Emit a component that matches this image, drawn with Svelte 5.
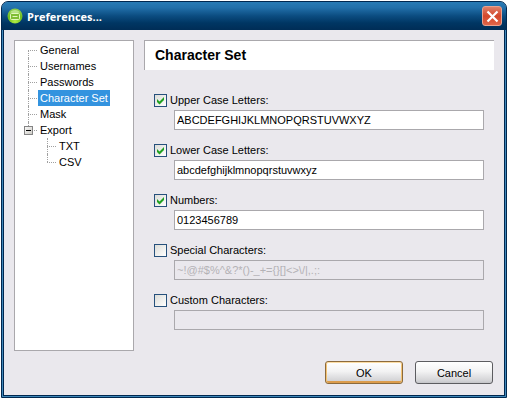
<script>
	let selected = $state('Character Set');
	let exportOpen = $state(true);

	const pages = ['General', 'Usernames', 'Passwords', 'Character Set', 'Mask'];
	const exportPages = ['TXT', 'CSV'];

	let fields = $state([
		{ id: 'upper', label: 'Upper Case Letters:', enabled: true, value: 'ABCDEFGHIJKLMNOPQRSTUVWXYZ' },
		{ id: 'lower', label: 'Lower Case Letters:', enabled: true, value: 'abcdefghijklmnopqrstuvwxyz' },
		{ id: 'numbers', label: 'Numbers:', enabled: true, value: '0123456789' },
		{ id: 'special', label: 'Special Characters:', enabled: false, value: '~!@#$%^&?*()-_+={}[]<>\\/|,.;:' },
		{ id: 'custom', label: 'Custom Characters:', enabled: false, value: '' }
	]);
</script>

{#snippet page(name)}
	<button class="node" class:selected={selected === name} onclick={() => (selected = name)}>{name}</button>
{/snippet}

<div class="window">
	<header class="titlebar">
		<svg class="logo" width="16" height="16" viewBox="0 0 16 16" aria-hidden="true">
			<defs>
				<radialGradient id="ball" cx="50%" cy="85%" r="85%">
					<stop offset="0" stop-color="#b4ee48" />
					<stop offset="0.55" stop-color="#6fbd1c" />
					<stop offset="1" stop-color="#8fcf50" />
				</radialGradient>
			</defs>
			<circle cx="8" cy="8" r="7.5" fill="url(#ball)" />
			<path d="M3 4.5C4.5 1 11.500 1 13 4.500Q8 6 3 4.500Z" fill="#d2efac" opacity="0.7" />
			<rect x="3.500" y="5.500" width="9" height="6" rx="1" fill="#7fbe35" stroke="#e2f7bd" />
			<path d="M5.500 8.500h5" stroke="#e2f7bd" />
		</svg>
		<span class="title">Preferences...</span>
		<button class="close" aria-label="Close">
			<svg width="13" height="13" viewBox="0 0 13 13" aria-hidden="true">
				<path d="M1.500 1.500l10 10M11.500 1.500l-10 10" stroke="#fff" stroke-width="2.200" />
			</svg>
		</button>
	</header>

	<div class="content">
		<nav class="tree">
			<ul>
				{#each pages as name}
					<li>{@render page(name)}</li>
				{/each}
				<li>
					<button class="toggle" aria-label="Toggle Export" onclick={() => (exportOpen = !exportOpen)}>
						<svg width="9" height="9" viewBox="0 0 9 9" aria-hidden="true">
							<path d="M2 4.500h5" stroke="#000" />
							{#if !exportOpen}
								<path d="M4.500 2v5" stroke="#000" />
							{/if}
						</svg>
					</button>
					{@render page('Export')}
					{#if exportOpen}
						<ul>
							{#each exportPages as name}
								<li>{@render page(name)}</li>
							{/each}
						</ul>
					{/if}
				</li>
			</ul>
		</nav>

		<main>
			<h1>Character Set</h1>
			<form>
				{#each fields as field (field.id)}
					<div class="field">
						<label>
							<input type="checkbox" bind:checked={field.enabled} />
							<span>{field.label}</span>
						</label>
						<input
							type="text"
							aria-label={field.label}
							bind:value={field.value}
							disabled={!field.enabled}
							spellcheck="false"
						/>
					</div>
				{/each}
			</form>
		</main>
	</div>

	<footer>
		<button class="btn default">OK</button>
		<button class="btn">Cancel</button>
	</footer>
</div>

<style>
	:global(body) {
		background: #fff;
	}

	.window,
	button,
	input {
		font-family: 'Liberation Sans', Arial, sans-serif;
		font-size: 11px;
		color: #000;
	}

	.window {
		box-sizing: border-box;
		display: flex;
		flex-direction: column;
		min-height: calc(100vh - 3px);
		margin: 1px 0 0 1px;
		border: 1px solid #002850;
		border-radius: 7px 7px 0 0;
		background: #eae8ed;
		box-shadow:
			inset 0 0 0 1px #3f87b8,
			inset 0 0 0 2px #002850;
	}

	/* Title bar */
	.titlebar {
		display: flex;
		align-items: center;
		height: 28px;
		padding: 0 4px 0 5px;
		border-radius: 6px 6px 0 0;
		background: linear-gradient(#287bb5, #2270aa 20%, #0b4c80 50%, #003663 75%, #002d56);
	}

	.title {
		flex: 1;
		margin-left: 4px;
		font-family: 'Open Sans', sans-serif;
		font-size: 11px;
		font-weight: bold;
		color: #fff;
	}

	.close {
		display: flex;
		align-items: center;
		justify-content: center;
		width: 20px;
		height: 20px;
		padding: 0;
		border: 1px solid #e8a18f;
		border-radius: 3px;
		background: linear-gradient(#df8069, #d3472b 50%, #df6549);
	}

	.content {
		flex: 1;
		display: flex;
		gap: 10px;
		padding: 10px 12px 0;
	}

	/* Navigation tree */
	.tree {
		box-sizing: border-box;
		width: 120px;
		padding: 1px 0 0 13px;
		border: 1px solid #aaa8ac;
		background: #fff;
	}

	ul {
		margin: 0;
		padding: 0;
		list-style: none;
	}

	li {
		position: relative;
		padding-left: 10px;
	}

	li > ul {
		margin-left: 9px;
	}

	/* Dotted branch: trunk down the left side, twig to the label */
	li::before,
	li::after {
		content: '';
		position: absolute;
		left: 0;
	}

	li::before {
		top: 0;
		height: 16px;
		border-left: 1px dotted #a0a0a0;
	}

	li:first-child::before {
		top: 8px;
		height: 8px;
	}

	ul ul li:first-child::before {
		top: 0;
		height: 16px;
	}

	li:last-child::before {
		height: 8px;
	}

	li::after {
		top: 8px;
		width: 9px;
		border-top: 1px dotted #a0a0a0;
	}

	.node {
		display: block;
		height: 16px;
		padding: 0 2px;
		border: none;
		background: none;
		line-height: 16px;
		white-space: nowrap;
	}

	.node.selected {
		background: #3393df;
		color: #fff;
	}

	.toggle {
		position: absolute;
		z-index: 1;
		top: 4px;
		left: -4px;
		display: flex;
		width: 9px;
		height: 9px;
		padding: 0;
		border: none;
		outline: 1px solid #848484;
		outline-offset: -1px;
		background: linear-gradient(135deg, #fff, #c8c6c0);
	}

	/* Settings page */
	main {
		flex: 1;
		min-width: 0;
	}

	h1 {
		margin: 0;
		padding: 0 10px;
		border-top: 1px solid #aaa8ac;
		border-left: 1px solid #aaa8ac;
		background: #fff;
		font-size: 14px;
		line-height: 29px;
	}

	form {
		display: flex;
		flex-direction: column;
		gap: 12px;
		padding: 22px 10px 0;
	}

	.field {
		display: flex;
		flex-direction: column;
	}

	label {
		display: flex;
		align-items: center;
		align-self: flex-start;
		gap: 3px;
		height: 16px;
		margin-bottom: 2px;
	}

	input[type='checkbox'] {
		appearance: none;
		width: 13px;
		height: 13px;
		margin: 0;
		border: 1px solid #26507c;
		background: linear-gradient(135deg, #dcdcd8, #fff);
	}

	input[type='checkbox']:checked {
		background:
			url("data:image/svg+xml,%3Csvg xmlns='http://www.w3.org/2000/svg' viewBox='0 0 11 11'%3E%3Cpath d='M2 4v3l2.500 2.500L9 5V2L4.500 6.500z' fill='%2321a121'/%3E%3C/svg%3E"),
			linear-gradient(135deg, #dcdcd8, #fff);
	}

	input[type='text'] {
		box-sizing: border-box;
		height: 20px;
		margin-left: 20px;
		padding: 0 2px;
		border: 1px solid #aaa8ac;
		border-radius: 0;
		background: #fff;
	}

	input[type='text']:disabled {
		background: #eae8ed;
		color: #b4b2b6;
	}

	/* Dialog buttons */
	footer {
		display: flex;
		justify-content: flex-end;
		gap: 12px;
		padding: 10px 13px 13px;
	}

	.btn {
		width: 78px;
		height: 23px;
		padding: 0;
		border: 1px solid #5c5c60;
		border-radius: 3px;
		background: linear-gradient(#fff, #f2f2f3 45%, #d2d2d5 90%, #c4c4c8);
	}

	.btn.default {
		border-color: #8c6a3c;
		box-shadow:
			inset 0 1px #fbdca4,
			inset 1px 0 #f3c376,
			inset -1px 0 #f3c376,
			inset 0 -2px #dc9c4c;
	}
</style>
